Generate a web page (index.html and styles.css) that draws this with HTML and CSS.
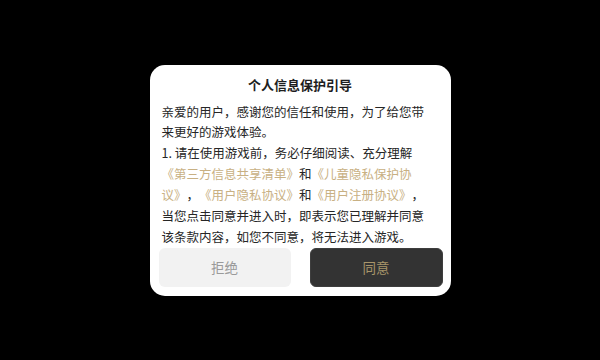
FILE: index.html
```html
<!DOCTYPE html>
<html lang="zh">
<head>
<meta charset="utf-8">
<link rel="stylesheet" href="styles.css">
</head>
<body>
<div class="dialog">
  <div class="title">个人信息保护引导</div>
  <div class="content">亲爱的用户，感谢您的信任和使用，为了给您带来更好的游戏体验。<br>1. 请在使用游戏前，务必仔细阅读、充分理解<span class="link">《第三方信息共享清单》</span>和<span class="link">《儿童隐私保护协议》</span>，<span class="link">《用户隐私协议》</span>和<span class="link">《用户注册协议》</span>，当您点击同意并进入时，即表示您已理解并同意该条款内容，如您不同意，将无法进入游戏。</div>
  <div class="actions">
    <div class="btn btn-reject">拒绝</div>
    <div class="btn btn-agree">同意</div>
  </div>
</div>
</body>
</html>
```
FILE: styles.css
```css
html, body {
  margin: 0;
  padding: 0;
}
body {
  width: 600px;
  height: 360px;
  background: #000;
  display: flex;
  align-items: center;
  justify-content: center;
  font-family: "Noto Sans CJK SC", "Noto Sans", sans-serif;
}
.dialog {
  width: 301px;
  height: 231px;
  background: #fff;
  border-radius: 15px;
  box-sizing: border-box;
  display: flex;
  flex-direction: column;
  overflow: hidden;
}
.title {
  margin-top: 10px;
  height: 20px;
  line-height: 20px;
  font-size: 13px;
  font-weight: bold;
  color: #1e1e1e;
  text-align: center;
}
.content {
  margin-top: 7px;
  padding: 0 16px 0 12px;
  font-size: 12.5px;
  line-height: 20.9px;
  color: #262626;
  text-spacing-trim: space-all;
  font-kerning: none;
  font-feature-settings: "halt" 0, "chws" 0, "palt" 0;
}
.link {
  color: #c8b083;
}
.actions {
  margin-top: auto;
  display: flex;
  gap: 19px;
  padding: 0 8px 9px 9px;
}
.btn {
  height: 39px;
  border-radius: 6px;
  display: flex;
  align-items: center;
  justify-content: center;
  font-size: 13.5px;
}
.btn-reject {
  width: 132px;
  background: #f2f2f2;
  color: #9a9a9a;
}
.btn-agree {
  flex: 1;
  background: #333;
  border: 1px solid #3e3e3e;
  box-sizing: border-box;
  color: #a8956a;
}
```
